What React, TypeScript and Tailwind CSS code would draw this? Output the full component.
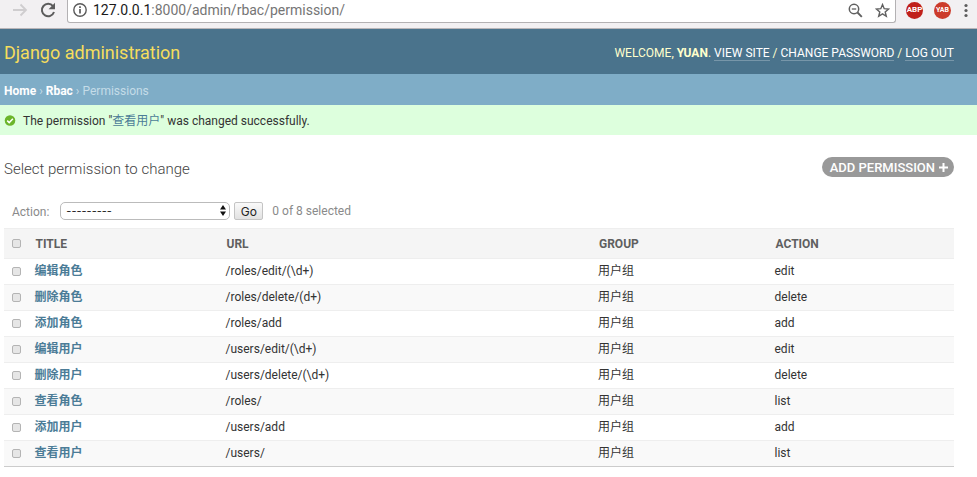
import { useState } from "react";

type Permission = {
  title: string;
  url: string;
  group: string;
  action: string;
};

const permissions: Permission[] = [
  { title: "编辑角色", url: "/roles/edit/(\\d+)", group: "用户组", action: "edit" },
  { title: "删除角色", url: "/roles/delete/(d+)", group: "用户组", action: "delete" },
  { title: "添加角色", url: "/roles/add", group: "用户组", action: "add" },
  { title: "编辑用户", url: "/users/edit/(\\d+)", group: "用户组", action: "edit" },
  { title: "删除用户", url: "/users/delete/(\\d+)", group: "用户组", action: "delete" },
  { title: "查看角色", url: "/roles/", group: "用户组", action: "list" },
  { title: "添加用户", url: "/users/add", group: "用户组", action: "add" },
  { title: "查看用户", url: "/users/", group: "用户组", action: "list" },
];

const checkboxClass =
  "block w-[9px] h-[9px] appearance-none rounded-[2px] border border-[#b4b4b4] bg-[#e6e6e6] checked:bg-[#79aec8]";

function BrowserBar() {
  return (
    <div className="flex h-[29px] items-start border-b border-[#b9b5b8] bg-[#f2f0f2] pr-[9px]">
      <div className="flex h-5 w-[67px] shrink-0 items-center gap-3 pl-3">
        <button aria-label="Forward" className="text-[#cfcdcf]">
          <svg className="h-4 w-4" viewBox="0 0 16 16" fill="none" stroke="currentColor" strokeWidth={1.8}>
            <path d="M1 8h13M8.5 2.5L14 8l-5.5 5.5" />
          </svg>
        </button>
        <button aria-label="Reload" className="text-[#5c5c5c]">
          <svg className="h-4 w-4" viewBox="0 0 16 16" fill="none">
            <path d="M13 4.2A6.2 6.2 0 1 0 14 10" stroke="currentColor" strokeWidth={2} />
            <path d="M15 .8v6.4H8.6z" fill="currentColor" />
          </svg>
        </button>
      </div>
      <div className="flex h-[23px] flex-1 items-start rounded-b-[3px] border border-t-0 border-[#b3b1b3] bg-white pr-[5px] pl-[5px]">
        <svg className="mt-[3px] mr-[6px] h-[14px] w-[14px] shrink-0" viewBox="0 0 14 14" fill="none" stroke="#5a5a5a">
          <circle cx="7" cy="7" r="6.2" strokeWidth="1.4" />
          <path d="M7 6v4.5M7 3.3v1.6" strokeWidth="1.7" />
        </svg>
        <div className="flex-1 text-sm leading-5 text-[#757575]">
          <span className="text-[#1a1a1a]">127.0.0.1</span>:8000/admin/rbac/permission/
        </div>
        <div className="flex h-5 items-center gap-3 text-[#606060]">
          <button aria-label="Zoom">
            <svg className="h-[15px] w-[15px]" viewBox="0 0 15 15" fill="none" stroke="currentColor">
              <circle cx="6" cy="6" r="4.7" strokeWidth="1.5" />
              <path d="M3.8 6h4.4" strokeWidth="1.3" />
              <path d="M9.5 9.5l4.3 4.3" strokeWidth="1.9" />
            </svg>
          </button>
          <button aria-label="Bookmark">
            <svg className="h-[15px] w-[15px]" viewBox="0 0 15 15" fill="none" stroke="currentColor" strokeWidth="1.4">
              <path d="M7.5 1.6l1.7 4.1 4.4.3-3.4 2.9 1.1 4.4-3.8-2.4-3.8 2.4 1.1-4.4L1.4 6l4.4-.3z" />
            </svg>
          </button>
        </div>
      </div>
      <div className="flex h-5 items-center pl-[10px]">
        <button className="flex h-[17px] w-[17px] items-center justify-center rounded-full bg-[#c0201a] text-[8px] leading-4 font-bold text-white">
          ABP
        </button>
        <button className="ml-[11px] flex h-[17px] w-[17px] items-center justify-center rounded-full bg-[#cc3b2b] text-[7px] leading-4 font-bold text-white">
          YAB
        </button>
        <button aria-label="Menu" className="ml-[13px] text-[#5c5c5c]">
          <svg className="h-[15px] w-1" viewBox="0 0 4 15" fill="currentColor">
            <circle cx="2" cy="2.5" r="1.6" />
            <circle cx="2" cy="7.5" r="1.6" />
            <circle cx="2" cy="12.5" r="1.6" />
          </svg>
        </button>
      </div>
    </div>
  );
}

export default function App() {
  const [selected, setSelected] = useState<number[]>([]);

  const toggle = (index: number) => {
    setSelected(selected.includes(index) ? selected.filter((i) => i !== index) : [...selected, index]);
  };

  const toggleAll = () => {
    setSelected(selected.length === permissions.length ? [] : permissions.map((_, i) => i));
  };

  return (
    <div className="min-h-screen bg-white font-['Roboto','Noto_Sans_CJK_SC',sans-serif] text-xs text-[#333]">
      <BrowserBar />

      <header className="flex h-[45px] items-center justify-between bg-[#4a738c] pr-[23px] pl-1">
        <h1 className="pt-[2px] text-lg leading-6 text-[#f5dd5d]">
          <a href="#">Django administration</a>
        </h1>
        <div className="pt-[2px] text-[#ffc] uppercase">
          Welcome, <strong className="font-bold">Yuan</strong>.{" "}
          <a href="#" className="border-b border-white/25 text-white">View site</a> /{" "}
          <a href="#" className="border-b border-white/25 text-white">Change password</a> /{" "}
          <a href="#" className="border-b border-white/25 text-white">Log out</a>
        </div>
      </header>

      <nav className="flex h-[31px] items-center gap-[3px] bg-[#7fadc7] pt-[2px] pl-1 text-[#c4dce8]">
        <a href="#" className="font-bold text-white">Home</a>
        <span>›</span>
        <a href="#" className="font-bold text-white">Rbac</a>
        <span>›</span>
        <span>Permissions</span>
      </nav>

      <div className="flex h-[30px] items-center gap-[7px] bg-[#dfd] pt-px pl-1">
        <svg className="h-3 w-3" viewBox="0 0 12 12">
          <circle cx="6" cy="5.5" r="5.3" fill="#6bb52a" />
          <path d="M3.2 5.6l2 2 3.7-3.8" fill="none" stroke="#fff" strokeWidth="1.5" />
        </svg>
        <p>
          The permission "<a href="#" className="text-[#4b7c97]">查看用户</a>" was changed successfully.
        </p>
      </div>

      <main className="pr-[23px] pl-1">
        <div className="flex items-center justify-between pt-5">
          <h2 className="pt-1 text-[15px] leading-5 font-light text-[#444]">Select permission to change</h2>
          <a
            href="#"
            className="flex h-5 items-center gap-1 rounded-full bg-[#999] pt-px pr-[6px] pl-2 text-[13px] font-medium text-white uppercase"
          >
            Add permission
            <svg className="h-[9px] w-[9px]" viewBox="0 0 9 9" stroke="#fff" strokeWidth="2">
              <path d="M4.5 0v9M0 4.5h9" />
            </svg>
          </a>
        </div>

        <div className="flex items-center pt-[23px] pb-2 pl-2 text-[#8a8a8a]">
          <label htmlFor="action" className="mr-[11px] pt-px">Action:</label>
          <div className="relative mr-1">
            <select
              id="action"
              className="block h-[18px] w-[170px] appearance-none rounded-[5px] border border-[#bbb] bg-white pl-[5px] font-['Inter',sans-serif] text-[11px] leading-4 text-[#222]"
            >
              <option>---------</option>
              <option>Delete selected permissions</option>
            </select>
            <svg className="pointer-events-none absolute top-[3px] right-1 h-[11px] w-[6px]" viewBox="0 0 6 11" fill="#111">
              <path d="M3 0l3 4.5H0zM3 11L0 6.5h6z" />
            </svg>
          </div>
          <button className="mr-[9px] h-[18px] w-[29px] rounded-[2px] border border-[#c4c4c4] bg-linear-to-b from-[#fafafa] to-[#e2e2e2] pt-px font-['Inter',sans-serif] leading-4 text-[#222]">
            Go
          </button>
          <span className="pb-px">{selected.length} of {permissions.length} selected</span>
        </div>

        <table className="w-full table-fixed border-b border-[#ccc] text-left">
          <colgroup>
            <col className="w-[3%]" />
            <col className="w-[20%]" />
            <col className="w-[39%]" />
            <col className="w-[19%]" />
            <col className="w-[19%]" />
          </colgroup>
          <thead>
            <tr className="h-[30px] border-y border-[#eee] bg-[#f5f5f5] text-[#5f5f5f] uppercase">
              <th className="pl-2">
                <input type="checkbox" aria-label="Select all" className={checkboxClass} checked={selected.length === permissions.length} onChange={toggleAll} />
              </th>
              <th className="pl-[3px] font-bold">Title</th>
              <th className="pl-1 font-bold">URL</th>
              <th className="pl-[6px] font-bold">Group</th>
              <th className="pl-[2px] font-bold">Action</th>
            </tr>
          </thead>
          <tbody>
            {permissions.map((permission, index) => (
              <tr key={permission.title} className="h-[26px] border-b border-[#eee] last:border-[#ccc] even:bg-[#f9f9f9]">
                <td className="pl-2">
                  <input type="checkbox" aria-label={permission.title} className={checkboxClass} checked={selected.includes(index)} onChange={() => toggle(index)} />
                </td>
                <th className="pb-px pl-[2px] font-bold text-[#4b7c97]">
                  <a href="#">{permission.title}</a>
                </th>
                <td className="pb-px pl-[3px]">{permission.url}</td>
                <td className="pb-px pl-[5px]">{permission.group}</td>
                <td className="pb-px pl-px">{permission.action}</td>
              </tr>
            ))}
          </tbody>
        </table>
      </main>
    </div>
  );
}
